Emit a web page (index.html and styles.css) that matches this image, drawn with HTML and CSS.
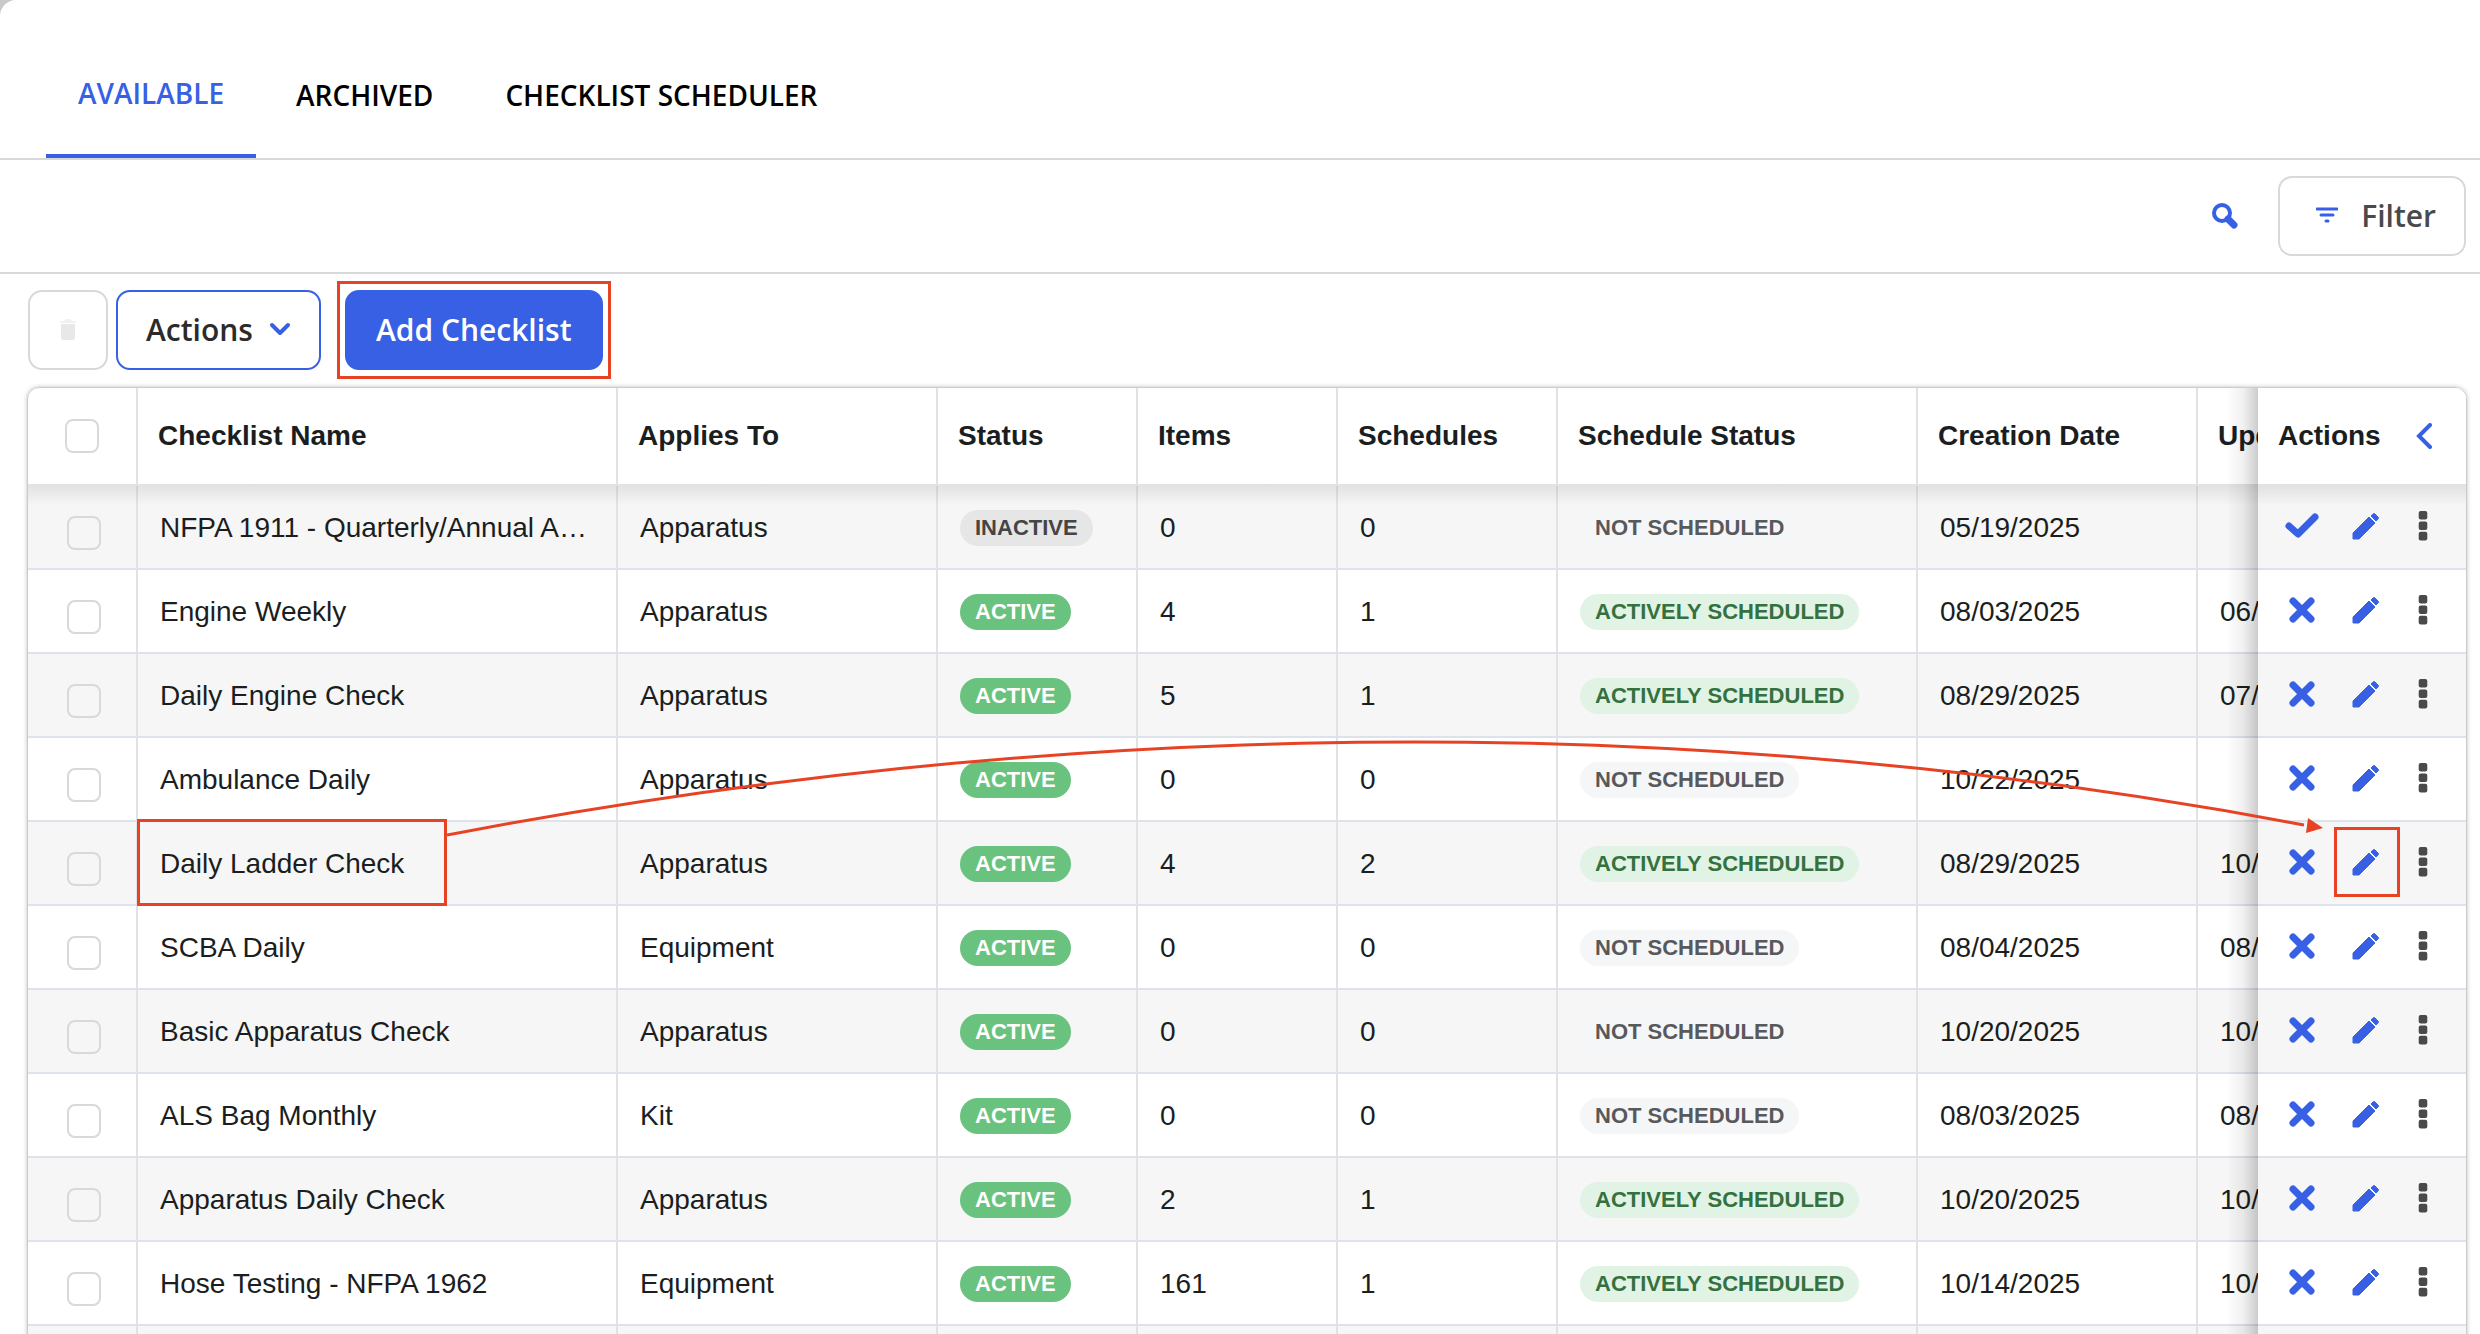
FILE: index.html
```html
<!DOCTYPE html>
<html lang="en">

<head>
    <meta charset="UTF-8">
    <title>Checklists</title>
    <link rel="stylesheet" href="styles.css">
</head>

<body>
    <svg class="sprite" aria-hidden="true">
        <symbol id="check" viewBox="0 0 36 28">
            <path d="M5 14 L14 22 L31 5" fill="none" stroke="currentColor" stroke-width="7" stroke-linecap="round" stroke-linejoin="round" />
        </symbol>
        <symbol id="cross" viewBox="0 0 36 28">
            <path d="M9 5 L27 23 M27 5 L9 23" fill="none" stroke="currentColor" stroke-width="7" stroke-linecap="round" />
        </symbol>
        <symbol id="pencil" viewBox="0 0 28 28">
            <path d="M1 27 V21 L17 5 L23 11 L7 27 Z" fill="currentColor" stroke="currentColor" stroke-width="1" stroke-linejoin="round" />
            <path d="M19 4 L21 2 Q22 1 23 2 L26 5 Q27 6 26 7 L24 9 Z" fill="currentColor" stroke="currentColor" stroke-width="1" stroke-linejoin="round" />
        </symbol>
        <symbol id="dots" viewBox="0 0 10 32">
            <rect x="0.7" y="1" width="8.6" height="8.6" rx="2" fill="currentColor" />
            <rect x="0.7" y="11.4" width="8.6" height="8.6" rx="2" fill="currentColor" />
            <rect x="0.7" y="21.8" width="8.6" height="8.6" rx="2" fill="currentColor" />
        </symbol>
    </svg>

    <main class="page">
        <nav class="tabs">
            <a class="tab active" href="#available">AVAILABLE</a>
            <a class="tab" href="#archived">ARCHIVED</a>
            <a class="tab" href="#scheduler">CHECKLIST SCHEDULER</a>
        </nav>

        <div class="search-bar">
            <button class="search-button" aria-label="Search">
                <svg width="26" height="26" viewBox="0 0 26 26">
                    <circle cx="10" cy="10" r="8" fill="none" stroke="currentColor" stroke-width="4" />
                    <path d="M16 16 L22 22" stroke="currentColor" stroke-width="7" stroke-linecap="round" />
                </svg>
            </button>
            <button class="button filter-button">
                <svg width="22" height="16" viewBox="0 0 22 16">
                    <path d="M1 2 H21 M5 8 H17 M10 14 H12" stroke="currentColor" stroke-width="3" stroke-linecap="round" />
                </svg>
                Filter
            </button>
        </div>

        <div class="toolbar">
            <button class="button delete-button" aria-label="Delete" disabled>
                <svg width="18" height="22" viewBox="0 0 18 22">
                    <path d="M1 2 H5 L7 0 H11 L13 2 H17 V4 H1 Z" fill="#f0f0f0" />
                    <path d="M2 5 H16 V19 Q16 21 14 21 H4 Q2 21 2 19 Z" fill="#e8e8e8" />
                </svg>
            </button>
            <button class="button actions-button">
                Actions
                <svg width="22" height="14" viewBox="0 0 22 14">
                    <path d="M3 3 L11 11 L19 3" fill="none" stroke="#3860e4" stroke-width="4" stroke-linecap="round" stroke-linejoin="round" />
                </svg>
            </button>
            <div class="add-wrap marked">
                <button class="button add-button">Add Checklist</button>
            </div>
        </div>

        <div class="grid">
            <table class="checklists">
                <colgroup>
                    <col class="col-select">
                    <col class="col-name">
                    <col class="col-applies">
                    <col class="col-status">
                    <col class="col-items">
                    <col class="col-schedules">
                    <col class="col-schedule-status">
                    <col class="col-date">
                    <col class="col-date">
                    <col class="col-actions">
                </colgroup>
                <thead>
                    <tr>
                        <th class="select"><input type="checkbox" aria-label="Select all"></th>
                        <th>Checklist Name</th>
                        <th>Applies To</th>
                        <th>Status</th>
                        <th>Items</th>
                        <th>Schedules</th>
                        <th>Schedule Status</th>
                        <th>Creation Date</th>
                        <th>Updated Date</th>
                        <th class="row-actions">
                            <div class="actions-head">
                                Actions
                                <button class="icon" aria-label="Collapse actions">
                                    <svg width="16" height="26" viewBox="0 0 16 26">
                                        <path d="M14 2 L3 13 L14 24" fill="none" stroke="currentColor" stroke-width="4" stroke-linecap="round" />
                                    </svg>
                                </button>
                            </div>
                        </th>
                    </tr>
                </thead>
                <tbody>
                    <tr>
                        <td class="select"><input type="checkbox" aria-label="Select NFPA 1911"></td>
                        <td>NFPA 1911 - Quarterly/Annual Apparatus Test</td>
                        <td>Apparatus</td>
                        <td><span class="badge inactive">INACTIVE</span></td>
                        <td>0</td>
                        <td>0</td>
                        <td><span class="badge not-scheduled">NOT SCHEDULED</span></td>
                        <td>05/19/2025</td>
                        <td></td>
                        <td class="row-actions">
                            <div class="icons">
                                <button class="icon" aria-label="Activate"><svg width="36" height="28"><use href="#check" /></svg></button>
                                <button class="icon edit" aria-label="Edit"><svg width="28" height="28"><use href="#pencil" /></svg></button>
                                <button class="icon more" aria-label="More"><svg width="10" height="32"><use href="#dots" /></svg></button>
                            </div>
                        </td>
                    </tr>
                    <tr>
                        <td class="select"><input type="checkbox" aria-label="Select Engine Weekly"></td>
                        <td>Engine Weekly</td>
                        <td>Apparatus</td>
                        <td><span class="badge live">ACTIVE</span></td>
                        <td>4</td>
                        <td>1</td>
                        <td><span class="badge scheduled">ACTIVELY SCHEDULED</span></td>
                        <td>08/03/2025</td>
                        <td>06/10/2025</td>
                        <td class="row-actions">
                            <div class="icons">
                                <button class="icon" aria-label="Deactivate"><svg width="36" height="28"><use href="#cross" /></svg></button>
                                <button class="icon edit" aria-label="Edit"><svg width="28" height="28"><use href="#pencil" /></svg></button>
                                <button class="icon more" aria-label="More"><svg width="10" height="32"><use href="#dots" /></svg></button>
                            </div>
                        </td>
                    </tr>
                    <tr>
                        <td class="select"><input type="checkbox" aria-label="Select Daily Engine Check"></td>
                        <td>Daily Engine Check</td>
                        <td>Apparatus</td>
                        <td><span class="badge live">ACTIVE</span></td>
                        <td>5</td>
                        <td>1</td>
                        <td><span class="badge scheduled">ACTIVELY SCHEDULED</span></td>
                        <td>08/29/2025</td>
                        <td>07/10/2025</td>
                        <td class="row-actions">
                            <div class="icons">
                                <button class="icon" aria-label="Deactivate"><svg width="36" height="28"><use href="#cross" /></svg></button>
                                <button class="icon edit" aria-label="Edit"><svg width="28" height="28"><use href="#pencil" /></svg></button>
                                <button class="icon more" aria-label="More"><svg width="10" height="32"><use href="#dots" /></svg></button>
                            </div>
                        </td>
                    </tr>
                    <tr>
                        <td class="select"><input type="checkbox" aria-label="Select Ambulance Daily"></td>
                        <td>Ambulance Daily</td>
                        <td>Apparatus</td>
                        <td><span class="badge live">ACTIVE</span></td>
                        <td>0</td>
                        <td>0</td>
                        <td><span class="badge not-scheduled">NOT SCHEDULED</span></td>
                        <td>10/22/2025</td>
                        <td></td>
                        <td class="row-actions">
                            <div class="icons">
                                <button class="icon" aria-label="Deactivate"><svg width="36" height="28"><use href="#cross" /></svg></button>
                                <button class="icon edit" aria-label="Edit"><svg width="28" height="28"><use href="#pencil" /></svg></button>
                                <button class="icon more" aria-label="More"><svg width="10" height="32"><use href="#dots" /></svg></button>
                            </div>
                        </td>
                    </tr>
                    <tr>
                        <td class="select"><input type="checkbox" aria-label="Select Daily Ladder Check"></td>
                        <td class="marked-name">Daily Ladder Check</td>
                        <td>Apparatus</td>
                        <td><span class="badge live">ACTIVE</span></td>
                        <td>4</td>
                        <td>2</td>
                        <td><span class="badge scheduled">ACTIVELY SCHEDULED</span></td>
                        <td>08/29/2025</td>
                        <td>10/20/2025</td>
                        <td class="row-actions">
                            <div class="icons">
                                <button class="icon" aria-label="Deactivate"><svg width="36" height="28"><use href="#cross" /></svg></button>
                                <button class="icon edit marked" aria-label="Edit"><svg width="28" height="28"><use href="#pencil" /></svg></button>
                                <button class="icon more" aria-label="More"><svg width="10" height="32"><use href="#dots" /></svg></button>
                            </div>
                        </td>
                    </tr>
                    <tr>
                        <td class="select"><input type="checkbox" aria-label="Select SCBA Daily"></td>
                        <td>SCBA Daily</td>
                        <td>Equipment</td>
                        <td><span class="badge live">ACTIVE</span></td>
                        <td>0</td>
                        <td>0</td>
                        <td><span class="badge not-scheduled">NOT SCHEDULED</span></td>
                        <td>08/04/2025</td>
                        <td>08/04/2025</td>
                        <td class="row-actions">
                            <div class="icons">
                                <button class="icon" aria-label="Deactivate"><svg width="36" height="28"><use href="#cross" /></svg></button>
                                <button class="icon edit" aria-label="Edit"><svg width="28" height="28"><use href="#pencil" /></svg></button>
                                <button class="icon more" aria-label="More"><svg width="10" height="32"><use href="#dots" /></svg></button>
                            </div>
                        </td>
                    </tr>
                    <tr>
                        <td class="select"><input type="checkbox" aria-label="Select Basic Apparatus Check"></td>
                        <td>Basic Apparatus Check</td>
                        <td>Apparatus</td>
                        <td><span class="badge live">ACTIVE</span></td>
                        <td>0</td>
                        <td>0</td>
                        <td><span class="badge not-scheduled">NOT SCHEDULED</span></td>
                        <td>10/20/2025</td>
                        <td>10/20/2025</td>
                        <td class="row-actions">
                            <div class="icons">
                                <button class="icon" aria-label="Deactivate"><svg width="36" height="28"><use href="#cross" /></svg></button>
                                <button class="icon edit" aria-label="Edit"><svg width="28" height="28"><use href="#pencil" /></svg></button>
                                <button class="icon more" aria-label="More"><svg width="10" height="32"><use href="#dots" /></svg></button>
                            </div>
                        </td>
                    </tr>
                    <tr>
                        <td class="select"><input type="checkbox" aria-label="Select ALS Bag Monthly"></td>
                        <td>ALS Bag Monthly</td>
                        <td>Kit</td>
                        <td><span class="badge live">ACTIVE</span></td>
                        <td>0</td>
                        <td>0</td>
                        <td><span class="badge not-scheduled">NOT SCHEDULED</span></td>
                        <td>08/03/2025</td>
                        <td>08/03/2025</td>
                        <td class="row-actions">
                            <div class="icons">
                                <button class="icon" aria-label="Deactivate"><svg width="36" height="28"><use href="#cross" /></svg></button>
                                <button class="icon edit" aria-label="Edit"><svg width="28" height="28"><use href="#pencil" /></svg></button>
                                <button class="icon more" aria-label="More"><svg width="10" height="32"><use href="#dots" /></svg></button>
                            </div>
                        </td>
                    </tr>
                    <tr>
                        <td class="select"><input type="checkbox" aria-label="Select Apparatus Daily Check"></td>
                        <td>Apparatus Daily Check</td>
                        <td>Apparatus</td>
                        <td><span class="badge live">ACTIVE</span></td>
                        <td>2</td>
                        <td>1</td>
                        <td><span class="badge scheduled">ACTIVELY SCHEDULED</span></td>
                        <td>10/20/2025</td>
                        <td>10/20/2025</td>
                        <td class="row-actions">
                            <div class="icons">
                                <button class="icon" aria-label="Deactivate"><svg width="36" height="28"><use href="#cross" /></svg></button>
                                <button class="icon edit" aria-label="Edit"><svg width="28" height="28"><use href="#pencil" /></svg></button>
                                <button class="icon more" aria-label="More"><svg width="10" height="32"><use href="#dots" /></svg></button>
                            </div>
                        </td>
                    </tr>
                    <tr>
                        <td class="select"><input type="checkbox" aria-label="Select Hose Testing"></td>
                        <td>Hose Testing - NFPA 1962</td>
                        <td>Equipment</td>
                        <td><span class="badge live">ACTIVE</span></td>
                        <td>161</td>
                        <td>1</td>
                        <td><span class="badge scheduled">ACTIVELY SCHEDULED</span></td>
                        <td>10/14/2025</td>
                        <td>10/14/2025</td>
                        <td class="row-actions">
                            <div class="icons">
                                <button class="icon" aria-label="Deactivate"><svg width="36" height="28"><use href="#cross" /></svg></button>
                                <button class="icon edit" aria-label="Edit"><svg width="28" height="28"><use href="#pencil" /></svg></button>
                                <button class="icon more" aria-label="More"><svg width="10" height="32"><use href="#dots" /></svg></button>
                            </div>
                        </td>
                    </tr>
                    <tr>
                        <td></td>
                        <td></td>
                        <td></td>
                        <td></td>
                        <td></td>
                        <td></td>
                        <td></td>
                        <td></td>
                        <td></td>
                        <td class="row-actions"></td>
                    </tr>
                </tbody>
            </table>

            <!-- arrow from the checklist name to its edit button -->
            <svg class="arrow" width="1880" height="110" viewBox="0 0 1880 110" aria-hidden="true">
                <path d="M0 98 Q953 -83 1857 88" fill="none" stroke="#e84225" stroke-width="3" />
                <path d="M1861 81 L1876 91 L1859 96 Z" fill="#e84225" />
            </svg>
        </div>
    </main>
</body>

</html>
```

FILE: styles.css
```css
*,
*::before,
*::after {
    box-sizing: border-box;
}

body {
    margin: 0;
    height: 100vh;
    overflow: hidden;
    background-color: #c9c9cb;
    color: #1a1e21;
    font-family: "Liberation Sans", Arial, Helvetica, sans-serif;
    font-size: 28px;
}

button {
    font-family: inherit;
    cursor: pointer;
}

.sprite {
    display: none;
}

.page {
    min-height: 100vh;
    background-color: white;
    border-top-left-radius: 16px;
}

.tabs {
    display: flex;
    gap: 8px;
    padding: 34px 46px 0;
    border-bottom: 2px solid #d9d9d9;
}

.tab {
    display: flex;
    align-items: center;
    height: 124px;
    padding: 0 32px 2px;
    color: black;
    font-family: "Open Sans", sans-serif;
    font-size: 28px;
    font-weight: 600;
    text-decoration: none;
}

.tab.active {
    color: #3860e4;
    border-bottom: 4px solid #3860e4;
}

.search-bar {
    display: flex;
    justify-content: flex-end;
    align-items: center;
    gap: 40px;
    padding: 16px 14px;
    border-bottom: 2px solid #d9d9d9;
}

.search-button {
    display: flex;
    padding: 0;
    border: none;
    background: none;
    color: #3860e4;
}

.button {
    display: flex;
    justify-content: center;
    align-items: center;
    height: 80px;
    padding: 0 28px 2px;
    border: 2px solid #d9d9d9;
    border-radius: 14px;
    background-color: white;
    color: #2b2b2b;
    font-family: "Open Sans", sans-serif;
    font-size: 30px;
    font-weight: 600;
}

.filter-button {
    gap: 23px;
    padding-left: 36px;
    color: #4a4a4a;
}

.filter-button svg {
    color: #3860e4;
}

.toolbar {
    display: flex;
    gap: 8px;
    padding: 16px 28px 17px;
}

.delete-button {
    width: 80px;
    padding: 0;
}

.actions-button {
    gap: 16px;
    border-color: #3860e4;
}

.add-wrap {
    margin-left: 16px;
}

.add-button {
    padding: 0 29px 2px;
    border-color: #3860e4;
    background-color: #3860e4;
    color: white;
}

/* red callout boxes */
.marked,
.marked-name {
    position: relative;
}

.marked::after,
.marked-name::after {
    content: "";
    position: absolute;
    border: 3px solid #e84225;
}

.add-wrap.marked::after {
    inset: -9px -8px;
    pointer-events: none;
}

.icon.marked::after {
    inset: -21px -20px -21px -18px;
}

.grid {
    position: relative;
    margin: 0 13px 0 27px;
    overflow: hidden;
    border: 1px solid #c8cccf;
    border-top-left-radius: 12px;
    border-top-right-radius: 12px;
    box-shadow: 0 0 4px rgba(0, 0, 0, 0.25);
}

.checklists {
    width: 2658px;
    table-layout: fixed;
    border-collapse: separate;
    border-spacing: 0;
}

.col-select {
    width: 110px;
}

.col-name {
    width: 480px;
}

.col-applies {
    width: 320px;
}

.col-status,
.col-items {
    width: 200px;
}

.col-schedules {
    width: 220px;
}

.col-schedule-status {
    width: 360px;
}

.col-date {
    width: 280px;
}

.col-actions {
    width: 208px;
}

th {
    position: relative;
    height: 98px;
    padding: 0 20px;
    border-right: 2px solid #e2e2e2;
    border-bottom: 2px solid #e2e2e2;
    text-align: left;
}

/* shadow of the header over the first row */
th::after {
    content: "";
    position: absolute;
    z-index: 1;
    top: 98px;
    left: 0;
    right: -2px;
    height: 20px;
    background: linear-gradient(rgba(0, 0, 0, 0.08), rgba(0, 0, 0, 0));
}

td {
    height: 84px;
    padding: 2px 22px 0;
    border-right: 2px solid #e2e2e2;
    border-bottom: 2px solid #dde2eb;
    overflow: hidden;
    white-space: nowrap;
    text-overflow: ellipsis;
}

tbody tr:nth-child(odd) td {
    background-color: #f6f6f6;
}

tbody tr:nth-child(even) td {
    background-color: white;
}

td.marked-name {
    overflow: visible;
}

.marked-name::after {
    top: -3px;
    bottom: -2px;
    left: -1px;
    width: 310px;
}

.select {
    padding: 0;
    text-align: center;
}

td.select {
    padding: 12px 0 0 4px;
}

.select input {
    appearance: none;
    display: block;
    width: 34px;
    height: 34px;
    margin: 0 auto;
    border: 2px solid #d9d9d9;
    border-radius: 8px;
}

.badge {
    display: inline-block;
    padding: 0 15px;
    border-radius: 18px;
    font-size: 22px;
    font-weight: bold;
    line-height: 36px;
    vertical-align: middle;
}

.inactive {
    background-color: #e6e6e6;
    color: #454545;
}

.live {
    background-color: #69c27d;
    color: white;
}

.scheduled {
    background-color: #e1f3e5;
    color: #35713f;
}

.not-scheduled {
    background-color: #f5f6f8;
    color: #58595b;
}

.row-actions {
    position: sticky;
    z-index: 1;
    right: 0;
    padding: 0 20px;
    border-right: none;
    overflow: visible;
}

th.row-actions {
    z-index: 2;
    background-color: white;
}

/* the pinned column fades over the cells that scroll under it */
.row-actions::before {
    content: "";
    position: absolute;
    top: 0;
    bottom: -2px;
    left: -32px;
    width: 32px;
    background: linear-gradient(to left, rgba(0, 0, 0, 0.2), rgba(0, 0, 0, 0.06) 45%, rgba(0, 0, 0, 0));
}

.actions-head,
.icons {
    display: flex;
    align-items: center;
}

.actions-head {
    justify-content: space-between;
    padding-right: 14px;
}

.icons {
    padding: 0 0 2px 6px;
}

.icon {
    display: flex;
    padding: 0;
    border: none;
    background: none;
    color: #3860e4;
}

.icon.edit {
    margin-left: 32px;
}

.icon.more {
    margin-left: 38px;
    color: #4a4a4a;
}

.arrow {
    position: absolute;
    z-index: 3;
    top: 349px;
    left: 419px;
    pointer-events: none;
}
```
